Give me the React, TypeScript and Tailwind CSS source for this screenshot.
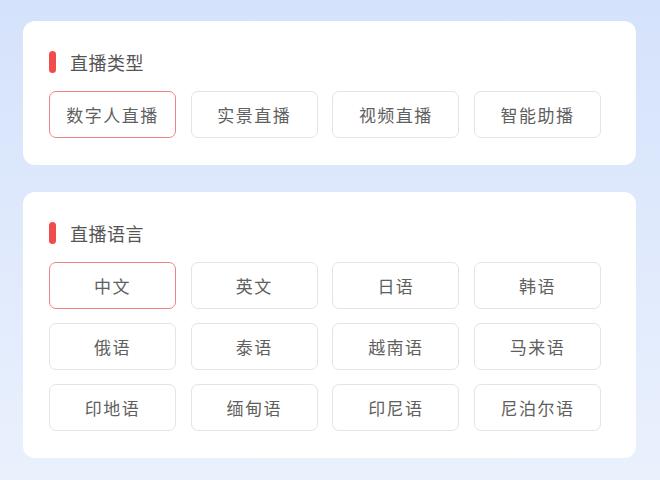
import React from "react";

const types = ["数字人直播", "实景直播", "视频直播", "智能助播"];
const langs = [
  "中文", "英文", "日语", "韩语",
  "俄语", "泰语", "越南语", "马来语",
  "印地语", "缅甸语", "印尼语", "尼泊尔语",
];

function Option({ label, active }: { label: string; active?: boolean }) {
  return (
    <div
      className={
        "flex h-[47px] items-center justify-center rounded-[7px] border bg-white text-[17px] tracking-[1.5px] text-[#606060] " +
        (active ? "border-[#ef8484]" : "border-[#e4e4e4]")
      }
    >
      {label}
    </div>
  );
}

function Section({ title, items, active }: { title: string; items: string[]; active: string }) {
  return (
    <div className="w-[613px] rounded-[12px] bg-white pl-[26px] pt-[29px] pb-[27px]">
      <div className="flex h-[24px] items-center">
        <div className="h-[22px] w-[7px] rounded-full bg-[#f24b4b]" />
        <div className="ml-[14px] text-[18px] leading-[24px] tracking-[0.5px] text-[#555]">{title}</div>
      </div>
      <div className="mt-[17px] grid grid-cols-[repeat(4,127px)] gap-x-[14.7px] gap-y-[14px]">
        {items.map((it) => (
          <Option key={it} label={it} active={it === active} />
        ))}
      </div>
    </div>
  );
}

export default function App() {
  return (
    <div
      className="flex h-[480px] w-[660px] flex-col gap-[27px] bg-gradient-to-b from-[#d4e2fb] to-[#eaf1fd] pl-[23px] pt-[21px]"
      style={{ fontFamily: '"Noto Sans CJK SC", "Noto Sans", sans-serif' }}
    >
      <Section title="直播类型" items={types} active="数字人直播" />
      <Section title="直播语言" items={langs} active="中文" />
    </div>
  );
}
